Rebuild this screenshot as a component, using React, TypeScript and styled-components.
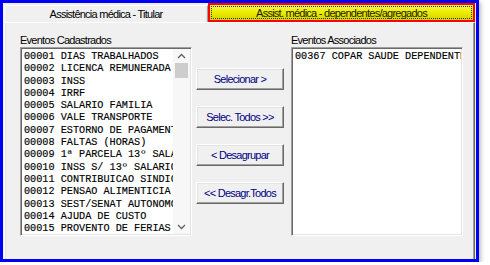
import styled, { createGlobalStyle } from 'styled-components';

const GlobalStyle = createGlobalStyle`
  html, body {
    margin: 0;
    padding: 0;
    background: #ffffff;
  }
`;

const uiFont = `
  font-family: "Liberation Sans", Arial, sans-serif;
  font-size: 11px;
  letter-spacing: -0.75px;
`;

const StyledWindow = styled.div`
  width: 479px;
  height: 262px;
  box-sizing: border-box;
  border: 3px solid #0000f2;
  background: #f0f0f0;
  display: flex;
  flex-direction: column;
  box-shadow: 2px 2px 4px rgba(0, 0, 0, 0.25);
  overflow: hidden;
`;

const StyledTabStrip = styled.div`
  display: flex;
  align-items: flex-end;
  height: 19px;
  padding-left: 1px;
  flex-shrink: 0;
`;

const StyledTab = styled.div<{ $active?: boolean }>`
  ${uiFont}
  position: relative;
  box-sizing: border-box;
  display: flex;
  align-items: center;
  justify-content: center;
  color: #000;
  width: ${(p) => (p.$active ? '267px' : '204px')};
  height: ${(p) => (p.$active ? '19px' : '17px')};
  ${(p) =>
    p.$active
      ? `
    border: 2px solid #ff0000;
    background: linear-gradient(#f6f660, #eeee00 45%, #d2d200);
    color: #1a1a00;
    &::after {
      content: '';
      position: absolute;
      inset: 1px;
      border: 1px dotted #333;
    }
  `
      : `
    border-top: 1px solid #ffffff;
    border-left: 1px solid #ffffff;
    border-right: 1px solid #a0a0a0;
    box-shadow: inset -1px 0 0 #e3e3e3;
  `}
`;

const StyledTabPanel = styled.div`
  flex: 1;
  margin: 0 1px;
  border-top: 1px solid #ffffff;
  border-left: 1px solid #ffffff;
  border-right: 1px solid #696969;
  box-shadow: inset -1px 0 0 #a0a0a0, inset 1px 0 0 #e3e3e3;
  padding: 10px 0 0 15px;
  display: flex;
  align-items: flex-start;
`;

const StyledColumn = styled.div<{ $gap: number }>`
  display: flex;
  flex-direction: column;
  width: 172px;
  margin-left: ${(p) => p.$gap}px;
`;

const StyledLabel = styled.div`
  ${uiFont}
  height: 14px;
  line-height: 14px;
  color: #000;
  white-space: nowrap;
`;

const StyledListBox = styled.div`
  box-sizing: border-box;
  height: 189px;
  background: #ffffff;
  border-top: 1px solid #a0a0a0;
  border-left: 1px solid #a0a0a0;
  border-right: 1px solid #ffffff;
  border-bottom: 1px solid #ffffff;
  box-shadow: inset 1px 1px 0 #696969, inset -1px -1px 0 #e3e3e3;
  padding: 1px;
  display: flex;
  overflow: hidden;
`;

const StyledItems = styled.div`
  flex: 1;
  min-width: 0;
  overflow: hidden;
  padding: 2px 0 0 2px;
`;

const StyledItem = styled.div`
  font-family: "Liberation Mono", "Courier New", monospace;
  font-size: 10.2px;
  line-height: 12.3px;
  height: 12.3px;
  color: #000;
  -webkit-text-stroke: 0.15px #000;
  white-space: pre;
  overflow: hidden;
`;

const StyledScrollBar = styled.div`
  width: 17px;
  flex-shrink: 0;
  background: #f7f7f7;
  display: flex;
  flex-direction: column;
  align-items: center;
`;

const StyledArrow = styled.div`
  height: 14px;
  width: 17px;
  display: flex;
  align-items: center;
  justify-content: center;
  flex-shrink: 0;
`;

const StyledThumb = styled.div`
  width: 13px;
  height: 15px;
  background: #cdcdcd;
`;

const StyledTrack = styled.div`
  flex: 1;
`;

const StyledButtonColumn = styled.div`
  display: flex;
  flex-direction: column;
  gap: 16px;
  width: 88px;
  margin-left: 4px;
  padding-top: 35px;
`;

const StyledActionButton = styled.button`
  ${uiFont}
  box-sizing: border-box;
  height: 22px;
  width: 100%;
  padding: 0;
  color: #000080;
  background: #f0f0f0;
  border-top: 1px solid #ffffff;
  border-left: 1px solid #ffffff;
  border-right: 1px solid #696969;
  border-bottom: 1px solid #696969;
  box-shadow: inset -1px -1px 0 #a0a0a0, inset 1px 1px 0 #e3e3e3;
  cursor: default;
`;

const Chevron = ({ up }: { up?: boolean }) => (
  <svg width="9" height="6" viewBox="0 0 9 6">
    <polyline
      points={up ? '1,5 4.5,1.5 8,5' : '1,1 4.5,4.5 8,1'}
      fill="none"
      stroke="#606060"
      strokeWidth="1.3"
    />
  </svg>
);

const cadastrados = [
  '00001 DIAS TRABALHADOS',
  '00002 LICENCA REMUNERADA',
  '00003 INSS',
  '00004 IRRF',
  '00005 SALARIO FAMILIA',
  '00006 VALE TRANSPORTE',
  '00007 ESTORNO DE PAGAMENTO',
  '00008 FALTAS (HORAS)',
  '00009 1ª PARCELA 13º SALARIO',
  '00010 INSS S/ 13º SALARIO',
  '00011 CONTRIBUICAO SINDICAL',
  '00012 PENSAO ALIMENTICIA',
  '00013 SEST/SENAT AUTONOMO',
  '00014 AJUDA DE CUSTO',
  '00015 PROVENTO DE FERIAS',
];

const associados = ['00367 COPAR SAUDE DEPENDENTE'];

const actions = ['Selecionar >', 'Selec. Todos >>', '< Desagrupar', '<< Desagr.Todos'];

const App = () => {
  return (
    <>
      <GlobalStyle />
      <StyledWindow>
        <StyledTabStrip>
          <StyledTab>Assistência médica - Titular</StyledTab>
          <StyledTab $active>Assist. médica - dependentes/agregados</StyledTab>
        </StyledTabStrip>
        <StyledTabPanel>
          <StyledColumn $gap={0}>
            <StyledLabel>Eventos Cadastrados</StyledLabel>
            <StyledListBox>
              <StyledItems>
                {cadastrados.map((item) => (
                  <StyledItem key={item}>{item}</StyledItem>
                ))}
              </StyledItems>
              <StyledScrollBar>
                <StyledArrow>
                  <Chevron up />
                </StyledArrow>
                <StyledThumb />
                <StyledTrack />
                <StyledArrow>
                  <Chevron />
                </StyledArrow>
              </StyledScrollBar>
            </StyledListBox>
          </StyledColumn>
          <StyledButtonColumn>
            {actions.map((label) => (
              <StyledActionButton key={label}>{label}</StyledActionButton>
            ))}
          </StyledButtonColumn>
          <StyledColumn $gap={7}>
            <StyledLabel>Eventos Associados</StyledLabel>
            <StyledListBox>
              <StyledItems>
                {associados.map((item) => (
                  <StyledItem key={item}>{item}</StyledItem>
                ))}
              </StyledItems>
            </StyledListBox>
          </StyledColumn>
        </StyledTabPanel>
      </StyledWindow>
    </>
  );
};

export default App;
